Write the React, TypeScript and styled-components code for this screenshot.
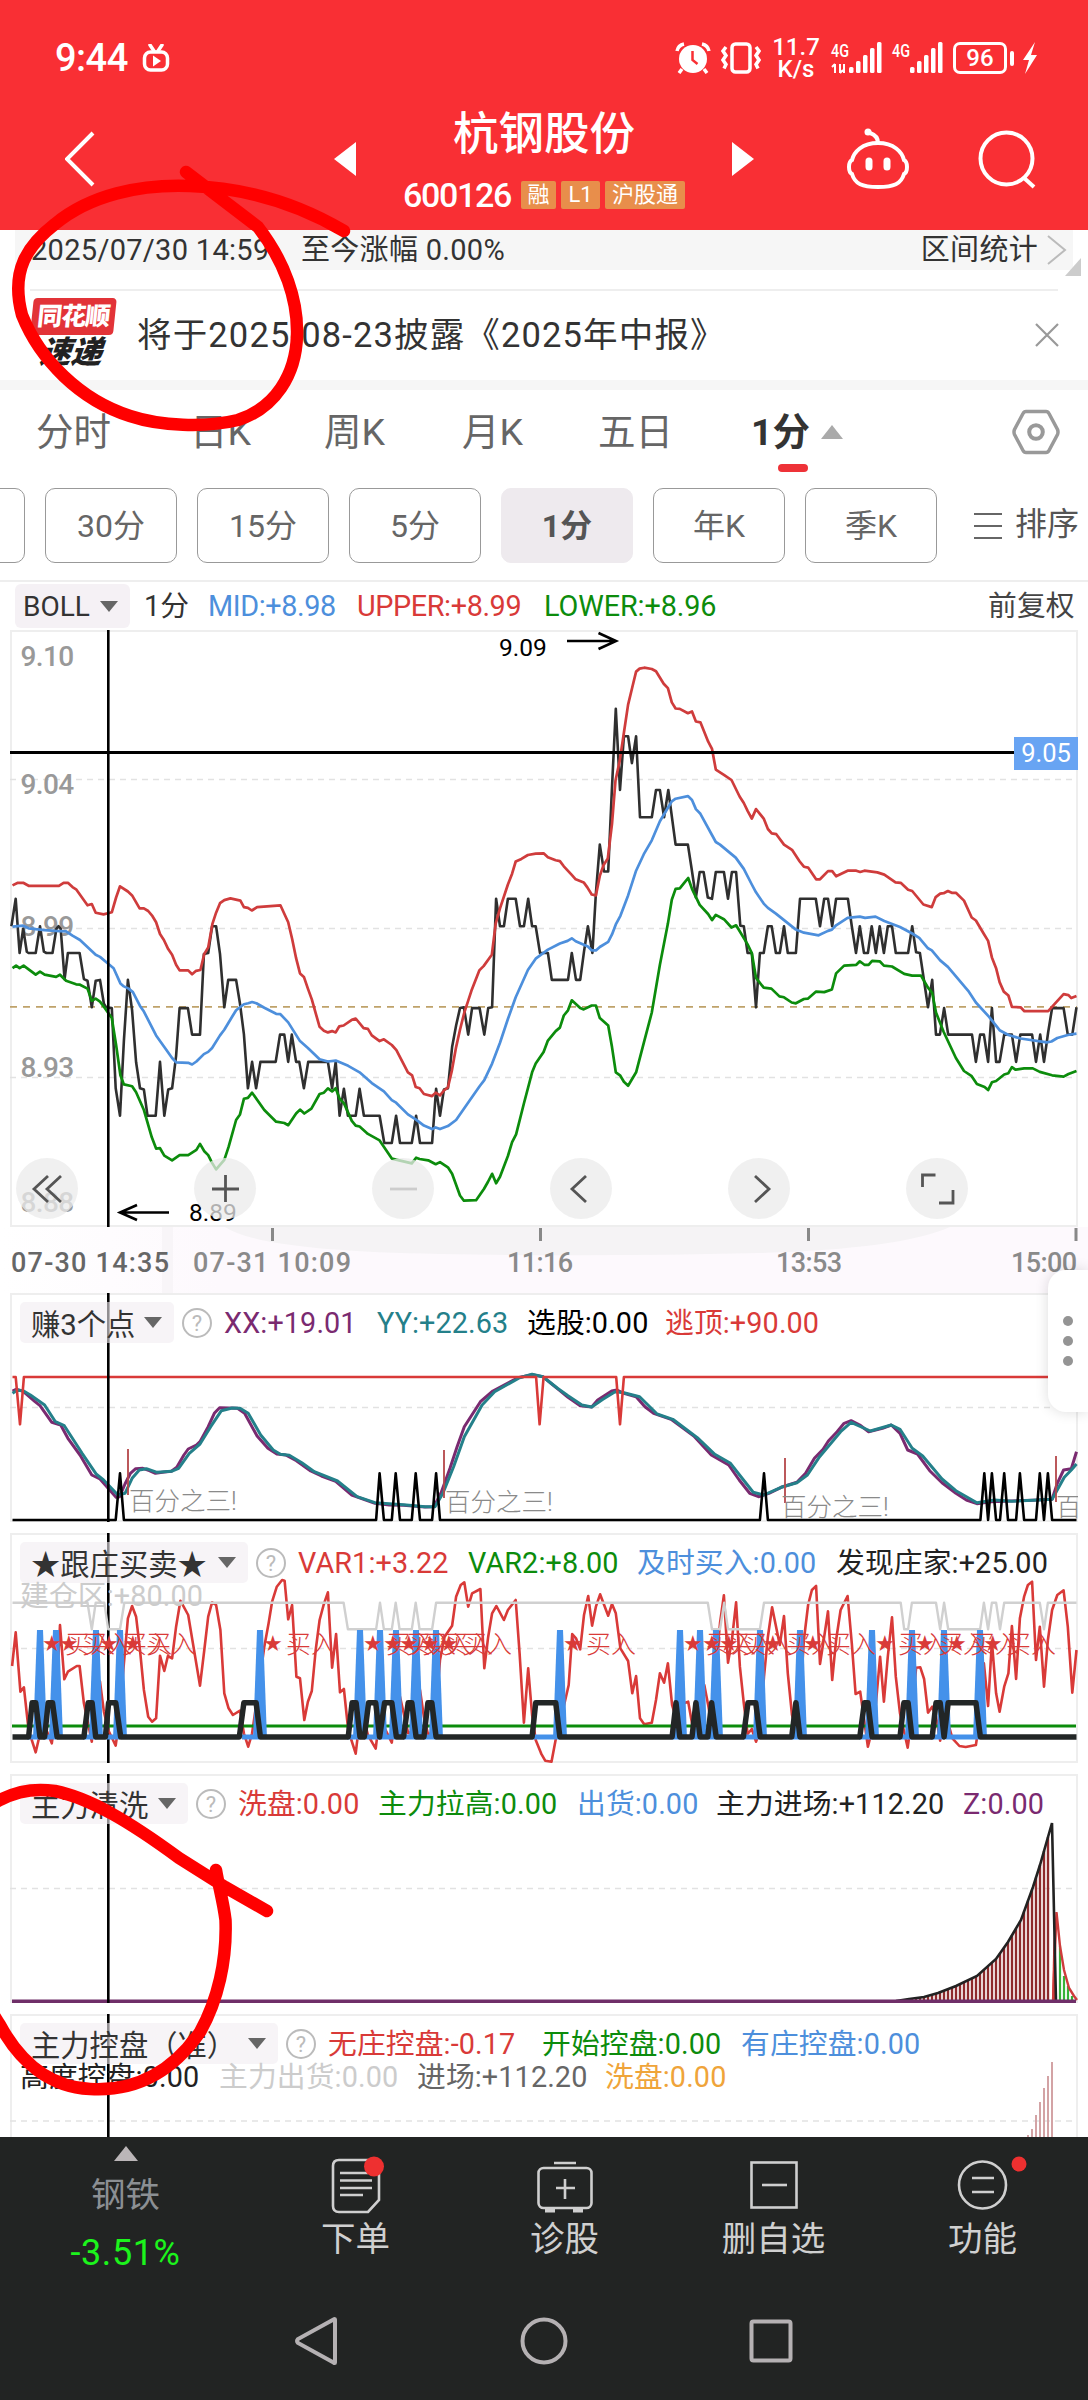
import React from 'react';
import styled, { createGlobalStyle, css } from 'styled-components';

export default function App() {
    return (
        <Screen>
            <GlobalStyle />
            <Header />
            <Summary />
            <News />
            <PeriodTabs />
            <PeriodChips />
            <BollLegend />
            <PriceChart />
            <TimeAxis />
            <ProfitPanel />
            <FollowPanel />
            <WashPanel />
            <ControlPanel />
            <BottomBar />
            <SystemBar />
            <SideHandle>
                <i /><i /><i />
            </SideHandle>
            <Marks />
        </Screen>
    );
}

/* ---------- chart helpers ---------- */

type Sheet = { x: number, kx: number, y: number, ky: number };

// Every series is kept in two halves, each one with its own origin and scale.
const scale = (sheet: Sheet, data: string) =>
    data
        .trim()
        .split(/\s+/)
        .map(pair => {
            const [x, y] = pair.split(',').map(Number);
            return `${(sheet.x + x / sheet.kx).toFixed(1)},${(sheet.y + y / sheet.ky).toFixed(1)}`;
        })
        .join(' ');

const PRICE_AM: Sheet = { x: 0, kx: 2.8, y: -10, ky: 2.306 };
const PRICE_PM: Sheet = { x: 540, kx: 2.861, y: -10, ky: 2.306 };

const panelSheets = (offset: number): [Sheet, Sheet] => [
    { x: 0, kx: 2.8, y: offset, ky: 3 },
    { x: 540, kx: 2.861, y: offset, ky: 3 },
];

function Series({ sheets, data, color, width = 2 }: SeriesProps) {
    return (
        <polyline
            points={ `${scale(sheets[0], data[0])} ${scale(sheets[1], data[1])}` }
            fill="none"
            stroke={color}
            strokeWidth={width}
            strokeLinejoin="round"
        />
    );
}

type SeriesProps = {
    sheets: [Sheet, Sheet]
    data: [string, string]
    color: string
    width?: number
}

const RED = '#d93a38';
const GREEN = '#0c8c0c';
const BLUE = '#4d8fdc';
const INK = '#2f2f2f';
const PURPLE = '#7a2a70';
const TEAL = '#24808a';

const UPPER: [string, string] = [
    `35,612 50,606 65,606 80,613 165,613 178,606 190,606 203,616 213,621 245,658 257,655 268,675 290,679 313,674 325,640 336,614
    358,626 370,635 391,665 403,665 415,671 427,683 437,697 448,724 459,738 471,759 482,772 493,795 503,808 527,808 538,817 549,809
    561,807 572,770 583,755 595,700 605,675 616,653 628,646 645,642 673,647 683,662 694,664 705,670 720,662 785,658 807,697 818,735
    829,780 840,815 851,823 862,850 873,875 885,910 895,938 907,947 918,951 930,948 940,951 950,937 962,935 985,922 996,919 1018,941
    1030,943 1041,958 1063,971 1075,967 1097,980 1110,992 1142,1043 1154,1050 1164,1077 1175,1080 1187,1093 1210,1098 1220,1090
    1232,1096 1243,1085 1254,1078 1265,1040 1277,985 1288,945 1300,905 1310,880 1320,855 1342,808 1354,798 1377,772 1388,700 1400,665
    1422,610 1434,585 1444,557 1460,551 1478,542 1500,539 1522,538 1534,547 1556,554`,
    `57,556 68,568 90,587 102,598 125,605 136,617 148,633 160,635 171,590 182,565 194,550 200,510 206,470 216,370 228,325 240,260
    252,195 264,155 275,119 285,112 298,110 320,113 332,118 354,147 366,157 377,190 388,204 400,205 423,215 435,211 446,234 459,236
    470,258 481,280 492,297 503,345 526,357 548,369 571,407 583,422 594,440 606,458 618,436 640,458 652,482 663,492 676,494 698,518
    721,530 743,557 755,569 767,571 790,598 801,598 824,579 836,579 847,591 880,578 905,578 916,581 928,578 965,582 985,587 1017,605
    1032,606 1053,622 1065,625 1097,656 1121,662 1132,639 1145,631 1155,630 1167,625 1178,629 1190,629 1213,647 1235,686 1247,693
    1270,724 1282,740 1293,778 1305,803 1315,835 1327,857 1340,866 1350,892 1375,893 1386,902 1454,902 1475,883 1498,863 1512,865
    1520,872 1535,867`,
];

const CLOSE: [string, string] = [
    `32,706 44,643 55,768 65,712 75,765 80,768 100,768 112,706 123,765 130,768 147,768 158,712 164,706 170,712 181,828 190,768
    223,768 235,828 245,832 257,893 268,832 280,830 291,885 297,893 313,895 324,1080 336,1143 347,970 358,830 370,900 381,1020
    392,1080 403,1083 413,1143 436,1143 448,1019 460,1143 471,1083 482,1080 493,1005 503,895 526,895 538,956 560,956 571,770 583,768
    594,706 605,706 616,770 628,893 639,830 661,830 672,885 683,955 694,1080 706,1019 717,1080 729,1019 772,1019 784,956 796,956
    807,1019 817,956 829,1019 838,1019 851,1080 863,1019 918,1019 930,1080 940,1019 951,1143 963,1081 974,1143 996,1143 1007,1081
    1019,1143 1063,1143 1076,1206 1097,1206 1109,1143 1120,1206 1153,1206 1165,1143 1176,1206 1210,1206 1221,1081 1232,1143
    1243,1083 1254,1080 1266,985 1277,935 1288,895 1299,893 1311,956 1322,895 1343,895 1356,956 1367,895 1378,893 1389,643 1400,706
    1411,706 1422,643 1444,643 1456,706 1467,706 1479,643 1490,706 1500,706 1512,768 1534,768 1545,830`,
    `57,830 80,830 91,768 103,830 115,830 126,765 137,706 150,768 160,630 171,518 183,580 195,580 205,400 217,205 229,392 240,268
    252,268 263,330 275,268 286,455 320,455 332,392 343,392 355,455 367,392 388,518 423,518 434,575 446,640 457,581 468,581 480,640
    492,643 503,581 526,581 538,643 549,581 561,581 573,705 583,706 594,768 606,768 618,893 629,768 640,768 652,706 663,706 675,768
    686,768 698,706 709,768 732,768 744,643 789,643 801,706 813,643 824,643 836,706 847,643 881,643 892,706 904,768 915,706 927,768
    938,768 949,706 961,768 972,706 984,768 995,706 1007,706 1018,768 1053,768 1065,706 1076,766 1087,768 1110,893 1122,830 1133,956
    1144,956 1156,895 1168,956 1236,956 1247,1019 1259,956 1270,956 1282,1019 1293,895 1305,1019 1315,1019 1328,956 1350,956
    1362,1019 1374,956 1408,956 1419,1019 1431,956 1442,1019 1454,950 1465,895 1498,895 1510,956 1523,956 1535,893`,
];

const MID: [string, string] = [
    `35,707 65,705 80,711 100,713 125,715 155,717 185,718 203,728 224,738 268,772 280,777 302,792 318,803 337,838 347,845 360,850
    372,858 392,890 403,903 437,958 460,985 482,1010 493,1020 527,1021 538,1025 550,1018 571,1001 583,996 594,987 616,958 628,945
    650,915 661,900 683,886 695,884 706,881 718,884 740,894 773,908 785,909 807,928 840,971 862,987 895,1013 918,1018 940,1016
    975,1028 1007,1043 1041,1068 1075,1087 1097,1107 1109,1113 1142,1140 1165,1152 1187,1166 1210,1174 1220,1170 1232,1174 1254,1167
    1277,1153 1310,1114 1343,1075 1356,1061 1378,1023 1400,975 1422,920 1444,870 1478,807 1500,781 1534,760`,
    `57,746 79,740 91,734 102,741 137,753 148,762 160,762 171,754 195,742 206,725 217,702 230,682 252,635 275,578 297,540 320,508
    343,464 377,418 388,412 423,406 435,415 446,436 459,447 503,512 515,518 560,548 583,574 606,610 618,628 640,654 652,664 675,677
    732,714 755,721 797,727 824,717 835,714 847,704 880,687 915,684 930,687 960,684 985,694 1030,708 1065,723 1085,733 1110,757
    1121,762 1145,785 1167,800 1225,855 1247,882 1285,915 1315,946 1340,957 1375,965 1450,974 1463,972 1480,964 1510,957 1535,954`,
];

const LOWER: [string, string] = [
    `35,803 45,797 55,803 66,797 100,818 112,811 125,818 157,823 168,818 185,832 213,840 224,841 245,850 257,878 268,873 280,880
    291,892 313,918 325,980 337,1050 347,1071 370,1075 381,1089 403,1130 425,1193 437,1219 448,1218 460,1235 482,1246 503,1234
    527,1234 550,1222 560,1208 572,1225 583,1234 594,1252 605,1267 628,1245 640,1215 661,1153 672,1140 683,1104 694,1102 706,1090
    740,1130 773,1157 796,1160 807,1165 829,1138 840,1129 852,1138 872,1127 895,1093 907,1090 918,1080 930,1087 940,1080 951,1104
    963,1114 985,1155 996,1166 1007,1168 1030,1185 1063,1200 1097,1242 1153,1253 1165,1240 1175,1243 1199,1246 1220,1255 1232,1250
    1254,1262 1266,1277 1288,1327 1299,1339 1333,1338 1355,1312 1366,1296 1378,1277 1389,1299 1400,1284 1422,1236 1434,1204
    1445,1186 1467,1115 1490,1043 1500,1023 1522,996 1534,970 1556,948`,
    `57,940 68,912 80,900 91,877 115,895 125,898 148,889 160,889 171,918 195,935 206,985 217,1043 229,1050 240,1065 252,1074
    275,1043 297,975 320,905 343,795 366,700 377,645 388,620 400,619 412,607 424,595 435,620 457,657 481,678 492,692 503,680 526,690
    548,709 561,704 594,748 606,768 618,825 640,848 662,850 685,868 698,870 720,882 732,884 755,874 767,873 790,857 813,858 835,852
    847,815 870,797 905,795 915,787 928,795 940,795 950,786 972,787 984,797 1007,799 1042,816 1065,820 1090,820 1110,848 1122,860
    1133,905 1155,950 1190,1010 1213,1040 1235,1052 1250,1070 1272,1077 1282,1084 1293,1066 1305,1063 1328,1048 1340,1045 1350,1031
    1360,1037 1385,1034 1410,1034 1430,1042 1465,1050 1498,1053 1512,1047 1535,1040`,
];

/* ---------- header ---------- */

const SIGNAL = [6, 12, 18, 25, 31];

function Signal({ data }: { data?: boolean }) {
    return (
        <SignalIcon width="51" height="32" viewBox="0 0 51 32" fill="#fff">
            <text x="0" y="15" fontSize="19" fontWeight="500" textLength="18" lengthAdjust="spacingAndGlyphs">4G</text>
            {
                data && <path d="M4 31V22M4 22l-3 3M9 22v9M9 31l3-3M13 22v9" stroke="#fff" strokeWidth="2" fill="none" />
            }
            { SIGNAL.map((h, i) => <rect key={h} x={18 + i * 7} y={31 - h} width="4.500" height={h} rx="1.500" />) }
        </SignalIcon>
    );
}

function Header() {
    return (
        <HeaderArea>
            <StatusBar>
                <Clock>9:44</Clock>
                <svg width="28" height="28" viewBox="0 0 28 28" fill="none" stroke="#fff" strokeWidth="3.500">
                    <path d="M8 1l4 6M20 1l-4 6" strokeLinecap="round" />
                    <rect x="2.500" y="8" width="23" height="18" rx="6" />
                    <path d="M11 11.500l8 5.500l-8 5.500z" fill="#fff" stroke="none" />
                </svg>
                <StatusRight>
                    <svg width="36" height="32" viewBox="0 0 36 32">
                        <circle cx="18" cy="17" r="14" fill="#fff" />
                        <path d="M7 27l-3 4M29 27l3 4M2 9a9 9 0 0 1 7-7M34 9a9 9 0 0 0-7-7" stroke="#fff" strokeWidth="3.500" fill="none" />
                        <path d="M17.500 9v9l5 4" stroke="#f92f34" strokeWidth="2.500" fill="none" />
                    </svg>
                    <svg width="40" height="32" viewBox="0 0 40 32" fill="none" stroke="#fff" strokeWidth="3.500">
                        <rect x="11" y="2" width="18" height="28" rx="3.500" />
                        <path d="M5 5l-3 4 3 4.500-3 4.500 3 4.500-2 4M35 5l3 4-3 4.500 3 4.500-3 4.500 2 4" />
                    </svg>
                    <Speed>
                        <span>11.7</span>
                        <span>K/s</span>
                    </Speed>
                    <Signal data />
                    <Signal />
                    <Battery>96</Battery>
                    <svg width="16" height="32" viewBox="0 0 16 32" fill="#fff">
                        <path d="M13 0L1 18h6L3 32 15 13H9z" />
                    </svg>
                </StatusRight>
            </StatusBar>
            <TitleBar>
                <svg width="30" height="56" viewBox="0 0 30 56" fill="none" stroke="#fff" strokeWidth="4">
                    <path d="M28 2L2 28l26 26" />
                </svg>
                <Arrow $side="left" />
                <TitleBlock>
                    <Title>杭钢股份</Title>
                    <CodeRow>
                        <Code>600126</Code>
                        <Tag $w={35}>融</Tag>
                        <Tag $w={39}>L1</Tag>
                        <Tag $w={80}>沪股通</Tag>
                    </CodeRow>
                </TitleBlock>
                <Arrow $side="right" />
                <RobotIcon width="70" height="62" viewBox="0 0 70 62" fill="none" stroke="#fff" strokeWidth="4">
                    <path d="M35 15c0-5-2-8-8-10" strokeLinecap="round" />
                    <circle cx="25" cy="4" r="3.500" fill="#fff" stroke="none" />
                    <path d="M35 15c16 0 24 9 26 17c4 2 4 12 0 14c-3 10-10 13-26 13s-23-3-26-13c-4-2-4-12 0-14c2-8 10-17 26-17z" />
                    <path d="M26 33v6M44 33v6" strokeWidth="7" strokeLinecap="round" />
                </RobotIcon>
                <SearchIcon width="58" height="60" viewBox="0 0 58 60" fill="none" stroke="#fff" strokeWidth="4">
                    <circle cx="28.500" cy="29.500" r="26" />
                    <path d="M45 48l11 10" />
                </SearchIcon>
            </TitleBar>
        </HeaderArea>
    );
}

function Summary() {
    return (
        <SummaryArea>
            <SummaryBar>
                <SummaryText $w={270}>2025/07/30 14:59</SummaryText>
                <SummaryText>至今涨幅 0.00%</SummaryText>
                <SummaryLink>区间统计</SummaryLink>
                <svg width="22" height="32" viewBox="0 0 22 32" fill="none" stroke="#bbb" strokeWidth="2">
                    <path d="M2 2l17 14L2 30" />
                </svg>
            </SummaryBar>
            <Fold />
        </SummaryArea>
    );
}

function News() {
    return (
        <NewsRow>
            <NewsLogo>
                <b>同花顺</b>
                <em>速递</em>
            </NewsLogo>
            <NewsText>将于2025-08-23披露《2025年中报》</NewsText>
            <svg width="24" height="24" viewBox="0 0 24 24" stroke="#999" strokeWidth="2.200">
                <path d="M1 1l22 22M23 1L1 23" />
            </svg>
        </NewsRow>
    );
}

const TABS = [
    { label: '分时', w: 154 },
    { label: '日K', w: 134 },
    { label: '周K', w: 138 },
    { label: '月K', w: 136 },
    { label: '五日', w: 153 },
];

function PeriodTabs() {
    return (
        <TabsRow>
            { TABS.map(tab => <Tab key={tab.label} $w={tab.w}>{tab.label}</Tab>) }
            <Tab $w={261} $active>
                1分
                <Triangle $up $size={11} $color="#aaa" />
            </Tab>
            <svg width="48" height="46" viewBox="0 0 48 46" fill="none" stroke="#999" strokeWidth="3.500">
                <path d="M14 2.500h20q2 0 3 2l8.500 16q1 2.500 0 5l-8.500 16q-1 2-3 2H14q-2 0-3-2L2.500 25.500q-1-2.500 0-5L11 4.500q1-2 3-2z" />
                <circle cx="24" cy="23" r="6.800" strokeWidth="4" />
            </svg>
        </TabsRow>
    );
}

const CHIPS = ['60分', '30分', '15分', '5分', '1分', '年K', '季K'];

function PeriodChips() {
    return (
        <ChipsRow>
            { CHIPS.map(chip => <Chip key={chip} $active={chip === '1分'}>{chip}</Chip>) }
            <SortButton>
                <svg width="28" height="28" viewBox="0 0 28 28" stroke="#666" strokeWidth="2.200">
                    <path d="M0 2h28M0 14h28M0 26h28" />
                </svg>
                <span>排序</span>
            </SortButton>
        </ChipsRow>
    );
}

function BollLegend() {
    return (
        <BollRow>
            <BollPill>
                BOLL
                <Triangle $size={9} $color="#666" />
            </BollPill>
            <Item $w={64} $color="#333">1分</Item>
            <Item $w={149} $color={BLUE} $tight={-0.4}>MID:+8.98</Item>
            <Item $w={187} $color={RED} $tight={-0.4}>UPPER:+8.99</Item>
            <Item $w={444} $color={GREEN} $tight={-0.1}>LOWER:+8.96</Item>
            <Item $w={90} $color="#444">前复权</Item>
        </BollRow>
    );
}

/* ---------- price chart ---------- */

const AXIS = [
    { label: '9.10', y: 36 },
    { label: '9.04', y: 164 },
    { label: '8.99', y: 306 },
    { label: '8.93', y: 447 },
    { label: '8.88', y: 582 },
];

function PriceChart() {
    const sheets: [Sheet, Sheet] = [PRICE_AM, PRICE_PM];

    return (
        <PriceFrame>
            <Plot width="1068" height="597" viewBox="10 0 1068 597">
                { [149, 298, 447].map(y => <Dashed key={y} d={`M10 ${y}.500H1077`} />) }
                <path d="M10 376.800H1077" stroke="#bfa26a" strokeWidth="1.800" strokeDasharray="7 6" />
                {
                    AXIS.map(tick => (
                        <AxisText key={tick.label} x="20.500" y={tick.y}>{tick.label}</AxisText>
                    ))
                }
                <Series sheets={sheets} data={CLOSE} color={INK} width={2.6} />
                <Series sheets={sheets} data={UPPER} color="#cf3c3c" width={2.7} />
                <Series sheets={sheets} data={MID} color={BLUE} width={2.7} />
                <Series sheets={sheets} data={LOWER} color={GREEN} width={2.7} />
                <PeakText x="499" y="26">9.09</PeakText>
                <path d="M567 11h48M598.500 3l17.500 8-17.500 8" stroke="#000" strokeWidth="2.600" fill="none" />
                <PeakText x="189" y="591">8.89</PeakText>
                <path d="M169 582.500h-48M137 575l-17 7.500 17 7.500" stroke="#000" strokeWidth="2.600" fill="none" />
                <path d="M10 122.500H1014" stroke="#000" strokeWidth="3" />
                <path d="M108.300 0V597" stroke="#000" strokeWidth="2.600" />
            </Plot>
            <PriceTag>9.05</PriceTag>
            <ToolRow>
                <Tool><path d="M32 18L18 31l14 13M45 18L31 31l14 13" /></Tool>
                <Tool><path d="M18 31h27M31.500 17v27" /></Tool>
                <Tool $faint><path d="M18 31h27" /></Tool>
                <Tool><path d="M36 18L22 31l14 13" /></Tool>
                <Tool><path d="M27 18l14 13-14 13" /></Tool>
                <Tool><path d="M16.500 29V17h13M47 32v13H33" /></Tool>
            </ToolRow>
        </PriceFrame>
    );
}

function Tool({ children, $faint }: { children: React.ReactNode, $faint?: boolean }) {
    return (
        <ToolButton>
            <svg width="62" height="62" viewBox="0 0 62 62" fill="none" stroke={$faint ? '#ccc' : '#555'} strokeWidth="2.800">
                {children}
            </svg>
        </ToolButton>
    );
}

function TimeAxis() {
    return (
        <AxisRow>
            <svg width="1088" height="68" viewBox="0 0 1088 68">
                <path d="M225 0H950Q900 22 760 26Q600 30 440 27Q260 24 225 0z" fill="#f5f3f5" />
                <path d="M162 0h11v68h-11z" fill="#f8f5f8" />
                <path d="M272.500 1v13M540.500 1v13M808.500 1v13M1076 1v13" stroke="#888" strokeWidth="3" />
                <TimeText x="11" y="45" textLength="158" $dark>07-30 14:35</TimeText>
                <TimeText x="193" y="45" textLength="158">07-31 10:09</TimeText>
                <TimeText x="507" y="45" textLength="66">11:16</TimeText>
                <TimeText x="776" y="45" textLength="66">13:53</TimeText>
                <TimeText x="1011" y="45" textLength="66">15:00</TimeText>
            </svg>
        </AxisRow>
    );
}

/* ---------- indicator panels ---------- */

type LegendItem = { text: string, w: number, color: string };

function Legend({ name, pill, items, second }: LegendProps) {
    return (
        <LegendArea>
            <LegendRow>
                <Pill $w={pill}>
                    <span>{name}</span>
                    <Triangle $size={9} $color="#666" />
                </Pill>
                <Help>?</Help>
                { items.map(item => <Item key={item.text} $w={item.w} $color={item.color}>{item.text}</Item>) }
            </LegendRow>
            {
                second && (
                    <LegendRow $second>
                        { second.map(item => <Item key={item.text} $w={item.w} $color={item.color}>{item.text}</Item>) }
                    </LegendRow>
                )
            }
        </LegendArea>
    );
}

type LegendProps = {
    name: string
    pill: number
    items: LegendItem[]
    second?: LegendItem[]
}

const XX: [string, string] = [
    `35,333 45,328 65,334 98,365 112,377 145,427 170,435 190,475 224,525 257,585 280,597 325,652 335,650 350,612 365,580 380,566
    400,565 418,572 435,580 460,576 480,574 495,562 515,525 527,507 550,495 560,485 583,440 600,400 615,383 640,384 665,385 685,400
    720,468 750,505 775,522 800,525 830,542 870,573 900,588 940,604 985,645 1050,670 1090,675 1130,676 1190,681 1215,680 1235,638
    1260,565 1280,500 1300,440 1345,365 1380,333 1450,293 1490,284 1520,290 1545,312`,
    `57,332 80,352 115,377 148,381 165,360 205,333 220,330 240,340 275,350 300,380 325,400 375,418 440,468 490,525 540,555 570,600
    600,640 625,650 655,640 690,622 735,607 760,580 785,535 810,508 825,483 850,455 870,430 890,422 915,435 940,455 980,445 1005,435
    1030,460 1052,510 1080,522 1115,572 1150,608 1190,640 1220,660 1250,671 1290,665 1410,661 1465,658 1480,610 1498,570 1520,566
    1535,515`,
];

const YY: [string, string] = [
    `35,340 48,331 65,332 85,345 125,375 155,425 180,437 230,520 270,583 290,600 330,645 350,640 370,595 390,570 410,566 440,577
    480,574 500,565 530,520 560,492 590,440 620,392 650,384 672,385 695,400 730,465 765,510 785,523 810,526 845,548 880,575 945,603
    1000,650 1050,668 1130,674 1190,680 1218,680 1240,640 1270,560 1300,470 1350,375 1385,335 1455,293 1490,283 1520,290`,
    `20,300 50,325 80,347 120,375 148,381 180,358 215,335 240,338 285,350 335,402 380,418 450,473 500,523 545,550 580,597 610,637
    640,645 690,622 735,608 765,585 800,530 860,455 890,427 945,453 1005,435 1030,448 1065,505 1095,528 1150,597 1190,632 1250,668
    1300,660 1350,664 1410,661 1465,658 1500,592 1520,570 1535,552`,
];

const ESCAPE: [string, string] = [
    '35,291 44,291 56,433 67,291 1501,291 1511,433 1522,291 1560,291',
    '57,291 218,291 229,433 240,291 1535,291',
];

const PICK: [string, string] = [
    `35,720 324,720 336,580 347,720 1053,720 1063,580 1075,720 1097,720 1108,580 1120,720 1153,720 1164,580 1176,720 1210,720
    1221,580 1232,720 1560,720`,
    `57,720 629,720 641,580 652,720 1260,720 1271,580 1282,720 1293,580 1305,720 1316,720 1328,580 1339,720 1362,720 1373,580
    1385,720 1419,720 1430,580 1442,720 1453,580 1465,720 1535,720`,
];

function ProfitPanel() {
    const sheets = panelSheets(-13);

    return (
        <Panel $h={229}>
            <Plot width="1068" height="229" viewBox="10 0 1068 229">
                <Dashed d="M10 114.500H1077" />
                <Series sheets={sheets} data={XX} color={PURPLE} width={3} />
                <Series sheets={sheets} data={YY} color={TEAL} width={3} />
                <Series sheets={sheets} data={ESCAPE} color={RED} width={2.6} />
                <path d="M128 156v46M444 157v48M785 165v45M1056 163v46" stroke="#b5474a" strokeWidth="1.800" />
                <Series sheets={sheets} data={PICK} color="#000" width={2.6} />
                <path d="M108.300 0V229" stroke="#000" strokeWidth="2.600" />
                <NoteText x="129" y="217">百分之三!</NoteText>
                <NoteText x="445" y="218">百分之三!</NoteText>
                <NoteText x="781" y="223">百分之三!</NoteText>
                <NoteText x="1056" y="223">百分之三!</NoteText>
            </Plot>
            <Legend
                name="赚3个点"
                pill={154}
                items={[
                    { text: 'XX:+19.01', w: 153, color: PURPLE },
                    { text: 'YY:+22.63', w: 150, color: TEAL },
                    { text: '选股:0.00', w: 138, color: '#000' },
                    { text: '逃顶:+90.00', w: 160, color: RED },
                ]}
            />
        </Panel>
    );
}

const SWING: [string, string] = [
    `34,408 44,307 57,485 67,472 80,600 100,667 110,620 130,600 145,640 155,560 168,285 180,448 190,425 215,408 223,408 235,520
    257,635 268,440 280,455 291,545 303,600 324,647 335,560 347,400 358,265 370,228 381,260 392,360 403,480 415,560 426,575 437,565
    448,377 460,423 470,378 482,385 493,290 505,212 527,255 540,340 560,467 572,360 583,260 594,217 605,225 617,300 628,490 640,535
    652,555 672,542 683,610 695,650 706,610 730,430 740,350 752,280 762,215 775,170 790,150 797,152 807,268 818,225 830,440 840,445
    852,570 862,515 873,483 884,360 895,270 906,225 918,187 930,413 941,312 952,487 963,477 975,600 996,671 1008,560 1020,570
    1030,615 1052,656 1063,560 1075,590 1097,638 1108,520 1120,500 1143,610 1165,600 1176,480 1187,560 1200,620 1210,600 1221,540
    1232,390 1245,320 1266,287 1277,200 1290,165 1300,157 1311,230 1322,190 1345,177 1356,415 1367,320 1378,250 1390,228 1411,270
    1422,240 1444,210 1455,370 1467,578 1479,415 1490,555 1500,630 1515,670`,
    `3,670 15,692 33,695 50,600 70,520 82,465 92,312 103,325 115,358 126,255 138,198 149,287 160,230 172,193 195,257 206,222
    217,250 230,355 252,393 264,490 275,438 286,565 298,583 320,578 332,510 343,430 355,458 366,400 378,525 400,600 412,520 424,515
    435,580 457,600 470,465 482,530 492,600 503,420 515,280 526,196 538,398 549,330 561,217 572,410 583,520 594,612 606,597 618,635
    630,600 641,440 652,320 664,232 686,345 698,258 709,430 721,555 732,600 744,520 755,330 767,225 778,180 790,168 801,402 813,320
    824,244 836,450 847,330 860,240 880,198 892,340 903,492 916,485 926,560 938,650 950,600 961,520 973,380 984,515 995,380 1007,262
    1018,440 1030,550 1052,653 1064,560 1076,413 1088,412 1099,447 1110,548 1122,530 1133,560 1145,632 1156,540 1168,580 1180,625
    1200,648 1218,651 1247,645 1259,560 1270,400 1282,528 1293,335 1305,490 1315,545 1328,470 1340,430 1350,288 1362,447 1373,265
    1385,200 1396,165 1408,155 1419,390 1430,290 1442,470 1453,330 1465,240 1480,195 1498,181 1510,290 1523,488 1535,360`,
];

const BUILD: [string, string] = [
    `35,218 245,218 257,298 268,218 292,218 303,298 336,298 348,218 962,218 974,298 1053,298 1064,218 1075,298 1097,298 1108,218
    1119,298 1153,298 1164,218 1175,298 1210,298 1221,218 1560,218`,
    `57,218 480,218 492,298 515,298 527,218 538,298 629,298 641,218 1032,218 1042,298 1053,298 1064,218 1133,218 1145,298 1156,218
    1168,298 1259,298 1270,218 1282,298 1293,218 1305,218 1316,298 1328,218 1430,218 1442,298 1453,218 1535,218`,
];

const BANKER: [string, string] = [
    `35,621 80,621 90,518 100,518 112,621 125,621 135,518 147,518 160,621 235,621 247,518 258,518 268,621 295,621 304,518 324,518
    338,621 670,621 683,518 717,518 729,621 975,621 986,518 997,518 1008,621 1020,621 1032,518 1052,518 1063,621 1077,518 1097,518
    1110,621 1130,621 1143,518 1153,518 1165,621 1187,621 1198,518 1209,518 1221,621 1490,621 1500,518 1553,518`,
    `45,518 57,621 378,621 389,518 400,621 435,621 446,518 458,621 480,621 491,518 504,621 582,621 595,518 617,518 630,621 720,621
    732,518 744,621 915,621 928,518 938,518 950,621 1030,621 1041,518 1053,518 1064,621 1122,621 1133,518 1145,518 1156,621 1168,518
    1247,518 1260,621 1535,621`,
];

// x of each buy spike, and how far its base runs to the left
const SPIKES = [
    [40, 9], [56, 9], [96, 9], [120, 10], [260, 14], [360, 9], [380, 12], [396, 12], [416, 9], [436, 9],
    [560, 24], [680, 4], [700, 4], [716, 4], [760, 13], [800, 4], [872, 9], [912, 9], [944, 9], [980, 30],
];

const STARS = [51, 68, 108, 132, 272, 372, 392, 408, 429, 448, 572, 692, 711, 728, 772, 812, 884, 924, 956, 992];

function FollowPanel() {
    const sheets = panelSheets(-3);

    return (
        <Panel $h={230}>
            <Plot width="1068" height="230" viewBox="10 0 1068 230">
                <Dashed d="M10 115.500H1077" />
                <path d="M108.300 0V230" stroke="#000" strokeWidth="2.600" />
                <Series sheets={sheets} data={SWING} color={RED} width={2.6} />
                <Series sheets={sheets} data={BUILD} color="#d0d0d0" width={2.4} />
                <path d="M12 193H1076" stroke={GREEN} strokeWidth="2.800" />
                {
                    SPIKES.map(([x, run]) => (
                        <React.Fragment key={x}>
                            <path d={`M${x - 3} 97h6l4 109h-14z`} fill="#4491ea" />
                            <path d={`M${x - run - 4} 204h${run + 4}`} stroke="#4491ea" strokeWidth="5" />
                        </React.Fragment>
                    ))
                }
                {
                    STARS.map(x => (
                        <React.Fragment key={x}>
                            <StarText x={x - 9} y="118">★</StarText>
                            <BuyText x={x + 14} y="120">买入</BuyText>
                        </React.Fragment>
                    ))
                }
                <Series sheets={sheets} data={BANKER} color="#222626" width={5.5} />
            </Plot>
            <Legend
                name="★跟庄买卖★"
                pill={228}
                items={[
                    { text: 'VAR1:+3.22', w: 170, color: RED },
                    { text: 'VAR2:+8.00', w: 169, color: GREEN },
                    { text: '及时买入:0.00', w: 199, color: BLUE },
                    { text: '发现庄家:+25.00', w: 220, color: '#222' },
                ]}
                second={[{ text: '建仓区:+80.00', w: 190, color: '#ccc' }]}
            />
        </Panel>
    );
}

// outline of the inflow hill: x, height over the base line
const HILL = [
    [896, 1], [909, 3], [924, 5], [938, 9], [956, 16], [977, 26], [996, 43], [1008, 60], [1021, 82], [1033, 115], [1040, 137], [1052, 179],
];

function hillHeight(x: number) {
    const next = HILL.findIndex(point => point[0] >= x);
    const [x1, h1] = HILL[next];
    const [x0, h0] = HILL[Math.max(next - 1, 0)];

    return x1 === x0 ? h1 : h0 + (h1 - h0) * (x - x0) / (x1 - x0);
}

function WashPanel() {
    const bars = Array.from({ length: 38 }, (_, i) => 1048 - i * 4);

    return (
        <Panel $h={229}>
            <Plot width="1068" height="229" viewBox="10 0 1068 229">
                <Dashed d="M10 114.500H1077" />
                { bars.map(x => <path key={x} d={`M${x} 228v-${hillHeight(x).toFixed(1)}`} stroke="#8e2a2c" strokeWidth="2.400" />) }
                <path d="M1060 228v-56M1064 228v-26M1068 228v-16M1072 228v-6" stroke="#36b336" strokeWidth="2.200" />
                <path d="M1052 227l1.500-70 2.500 70z" fill={RED} />
                <path d="M1053 227L1056.500 138L1060 172L1064 196L1069 214L1074 222L1077 226" stroke="#cf3c3c" strokeWidth="2.400" fill="none" />
                <polyline
                    points={ HILL.map(([x, h]) => `${x},${228 - h}`).join(' ') + ' 1056,228' }
                    fill="none"
                    stroke="#222"
                    strokeWidth="2.600"
                />
                <path d="M12 227.500H1076" stroke="#6f2f68" strokeWidth="4" />
                <path d="M108.300 0V229" stroke="#000" strokeWidth="2.600" />
            </Plot>
            <Legend
                name="主力清洗"
                pill={168}
                items={[
                    { text: '洗盘:0.00', w: 140, color: RED },
                    { text: '主力拉高:0.00', w: 199, color: GREEN },
                    { text: '出货:0.00', w: 139, color: BLUE },
                    { text: '主力进场:+112.20', w: 247, color: '#222' },
                    { text: 'Z:0.00', w: 80, color: PURPLE },
                ]}
            />
        </Panel>
    );
}

const TAIL_BARS = [48, 62, 74, 88, 101, 115, 121];

function ControlPanel() {
    return (
        <Panel $h={123} $last>
            <Plot width="1068" height="123" viewBox="10 0 1068 123">
                <Dashed d="M10 107H1077" />
                { TAIL_BARS.map((y, i) => <path key={y} d={`M${1052 - i * 4} ${y}V123`} stroke="#d3a3a5" strokeWidth="2" />) }
                <path d="M108.300 0V123" stroke="#000" strokeWidth="2.600" />
            </Plot>
            <Legend
                name="主力控盘（准）"
                pill={258}
                items={[
                    { text: '无庄控盘:-0.17', w: 214, color: RED },
                    { text: '开始控盘:0.00', w: 199, color: GREEN },
                    { text: '有庄控盘:0.00', w: 199, color: BLUE },
                ]}
                second={[
                    { text: '高度控盘:0.00', w: 199, color: '#222' },
                    { text: '主力出货:0.00', w: 198, color: '#ccc' },
                    { text: '进场:+112.20', w: 188, color: '#666' },
                    { text: '洗盘:0.00', w: 140, color: '#efa43a' },
                ]}
            />
        </Panel>
    );
}

/* ---------- bottom ---------- */

function BottomBar() {
    return (
        <BottomRow>
            <Sector>
                <Triangle $up $size={12} $color="#bbb6b8" />
                <SectorName>钢铁</SectorName>
                <SectorChange>-3.51%</SectorChange>
            </Sector>
            <NavItem>
                <NavIcon viewBox="0 0 80 64">
                    <path d="M23 8q-6 0-6 6v40q0 6 6 6h29l11-12V14q0-6-6-6z" />
                    <path d="M24 21h28M24 28.500h32M24 36h32M24 43h23" />
                    <circle cx="58" cy="14.500" r="10" fill="#ee3030" stroke="none" />
                </NavIcon>
                下单
            </NavItem>
            <NavItem>
                <NavIcon viewBox="0 0 80 64">
                    <rect x="13.500" y="16" width="53" height="40" rx="5" />
                    <path d="M29 11h22M40 27v20M31 36h19" />
                    <path d="M20 58h10M48 58h10" strokeWidth="5" />
                </NavIcon>
                诊股
            </NavItem>
            <NavItem>
                <NavIcon viewBox="0 0 80 64">
                    <rect x="17.500" y="10.500" width="45" height="45" />
                    <path d="M28 33h25" />
                </NavIcon>
                删自选
            </NavItem>
            <NavItem>
                <NavIcon viewBox="0 0 80 64">
                    <circle cx="39.500" cy="33" r="23.500" />
                    <path d="M29 26h22M29 40h22" />
                    <circle cx="76" cy="12" r="7.500" fill="#ee3030" stroke="none" />
                </NavIcon>
                功能
            </NavItem>
        </BottomRow>
    );
}

function SystemBar() {
    return (
        <SystemRow>
            <svg width="46" height="52" viewBox="0 0 46 52"><path d="M41 4.500v43q0 1-1.500 0L4 28q-2-2 0-4L39.500 4.500q1.500-1 1.500 0z" /></svg>
            <svg width="52" height="52" viewBox="0 0 52 52"><circle cx="26" cy="26" r="21.500" /></svg>
            <svg width="46" height="52" viewBox="0 0 46 52"><rect x="3.500" y="6.500" width="39" height="39" rx="2" /></svg>
        </SystemRow>
    );
}

function Marks() {
    return (
        <MarksLayer viewBox="0 0 1088 2400">
            <path d="M186 172L258 227C285 262 298 300 297 335C296 375 275 408 238 420C205 428 160 426 130 416C80 400 40 360 22 315C10 270 28 245 55 224C90 195 140 184 190 186C250 188 300 205 344 231" />
            <path d="M267 1911L225 1887L179 1858C130 1822 90 1798 55 1791C35 1788 15 1792 0 1800C-60 1830 -50 1950 0 2025C20 2062 50 2087 90 2089C140 2092 175 2068 200 2032C218 2000 227 1960 225.500 1920C223 1900 219 1888 216 1870" />
        </MarksLayer>
    );
}

/* ---------- styles ---------- */

const GlobalStyle = createGlobalStyle`
    * {
        box-sizing: border-box;
    }

    body {
        margin: 0;
        background: #fff;
        font-family: Roboto, "Noto Sans CJK SC", sans-serif;
    }

    svg {
        display: block;
        flex: none;
    }
`;

const Screen = styled.div`
    position: relative;
    width: 1088px;
    height: 2400px;
    overflow: hidden;
    background: #fff;
`;

const HeaderArea = styled.header`
    height: 230px;
    background: #f92f34;
    color: #fff;
`;

const StatusBar = styled.div`
    display: flex;
    align-items: center;
    height: 100px;
    padding: 16px 50px 0 55px;
`;

const Clock = styled.div`
    width: 87px;
    font-size: 38px;
    font-weight: 500;
    letter-spacing: -0.5px;
`;

const StatusRight = styled.div`
    display: flex;
    align-items: center;
    gap: 10px;
    margin-left: auto;
`;

const SignalIcon = styled.svg`
    overflow: visible;
`;

const Speed = styled.div`
    display: flex;
    flex-direction: column;
    align-items: center;
    width: 50px;
    font-size: 24px;
    font-weight: 500;
    line-height: 22px;
`;

const Battery = styled.div`
    position: relative;
    width: 54px;
    height: 32px;
    margin: 0 5px 0 0;
    border: 3px solid #fff;
    border-radius: 7px;
    font-size: 24px;
    font-weight: 500;
    line-height: 27px;
    text-align: center;

    &::after {
        content: '';
        position: absolute;
        top: 6px;
        right: -10px;
        width: 4px;
        height: 15px;
        border-radius: 2px;
        background: #fff;
    }
`;

const TitleBar = styled.div`
    display: flex;
    align-items: center;
    height: 118px;
    padding-left: 65px;
`;

const Arrow = styled.div<{ $side: 'left' | 'right' }>`
    border: 17px solid transparent;

    ${({ $side }) => $side === 'left' ? css`
        margin-left: 239px;
        border-left-width: 0;
        border-right: 22px solid #fff;
    ` : css`
        border-right-width: 0;
        border-left: 22px solid #fff;
    `}
`;

const TitleBlock = styled.div`
    display: flex;
    flex-direction: column;
    align-items: center;
    width: 376px;
`;

const Title = styled.h1`
    margin: 0;
    font-size: 45.5px;
    font-weight: 500;
    line-height: 62px;
`;

const CodeRow = styled.div`
    display: flex;
    align-items: center;
    gap: 5px;
    height: 48px;
    padding-top: 9px;
`;

const Code = styled.div`
    margin-right: 5px;
    font-size: 34px;
    font-weight: 500;
    letter-spacing: -1.3px;
`;

const Tag = styled.div<{ $w: number }>`
    width: ${({ $w }) => $w}px;
    height: 28px;
    border-radius: 2px;
    background: #e88e4b;
    font-size: 22px;
    line-height: 28px;
    text-align: center;
`;

const RobotIcon = styled.svg`
    margin-left: 89px;
`;

const SearchIcon = styled.svg`
    margin-left: 65px;
`;

const SummaryArea = styled.div`
    position: relative;
    height: 59px;
    padding: 0 15px;
`;

const SummaryBar = styled.div`
    display: flex;
    align-items: center;
    height: 40px;
    padding: 0 5px 0 16px;
    background: #f6f6f6;
    color: #333;
`;

const SummaryText = styled.div<{ $w?: number }>`
    width: ${({ $w }) => $w ? `${$w}px` : 'auto'};
    font-size: 29px;
    letter-spacing: 0.3px;
    line-height: 38px;
    white-space: nowrap;
`;

const SummaryLink = styled(SummaryText)`
    margin: 0 8px 0 auto;
`;

const Fold = styled.div`
    position: absolute;
    top: 28px;
    right: 7px;
    border-left: 16px solid transparent;
    border-bottom: 18px solid #ccc;
`;

const NewsRow = styled.div`
    display: flex;
    align-items: center;
    height: 101px;
    padding: 0 29px 0 30px;
    border-bottom: 10px solid #f6f6f6;
    background: linear-gradient(#eee, #eee) 30px 0 / 1028px 2px no-repeat;
`;

const NewsLogo = styled.div`
    display: flex;
    flex-direction: column;
    width: 107px;
    transform: skewX(-6deg);

    b {
        width: 83px;
        height: 37px;
        border-radius: 4px;
        background: #e23338;
        color: #fff;
        font-size: 25px;
        font-weight: 900;
        letter-spacing: -1px;
        line-height: 37px;
        text-align: center;
    }

    em {
        padding-left: 12px;
        color: #222;
        font-size: 31px;
        font-weight: 900;
        line-height: 36px;
    }
`;

const NewsText = styled.div`
    flex: 1;
    margin-top: -6px;
    color: #333;
    font-size: 34.5px;
    letter-spacing: 1.15px;
    white-space: nowrap;
`;

const TabsRow = styled.div`
    display: flex;
    align-items: center;
    height: 98px;
    padding: 0 28px 15px 36px;
`;

const Tab = styled.div<{ $w: number, $active?: boolean }>`
    display: flex;
    align-items: center;
    gap: 11px;
    position: relative;
    width: ${({ $w }) => $w}px;
    color: #666;
    font-size: 37.5px;
    line-height: 50px;

    ${({ $active }) => $active && css`
        color: #333;
        font-weight: 700;

        &::after {
            content: '';
            position: absolute;
            left: 27px;
            bottom: -15px;
            width: 30px;
            height: 8px;
            border-radius: 4px;
            background: #ee3238;
        }
    `}
`;

const Triangle = styled.i<{ $up?: boolean, $size: number, $color: string }>`
    display: block;
    flex: none;
    border: ${({ $size }) => $size}px solid transparent;

    ${({ $up, $size, $color }) => $up ? css`
        border-top-width: 0;
        border-bottom: ${$size * 1.3}px solid ${$color};
    ` : css`
        border-bottom-width: 0;
        border-top: ${$size * 1.3}px solid ${$color};
    `}
`;

const ChipsRow = styled.div`
    display: flex;
    gap: 20px;
    height: 94px;
    margin-left: -107px;
    border-bottom: 2px solid #eee;
`;

const Chip = styled.div<{ $active: boolean }>`
    flex: none;
    width: 132px;
    height: 75px;
    border: 1px solid #999;
    border-radius: 10px;
    color: #666;
    font-size: 32px;
    line-height: 74px;
    text-align: center;

    ${({ $active }) => $active && css`
        border-color: #eeeaee;
        background: #eeeaee;
        color: #555;
        font-weight: 700;
    `}
`;

const SortButton = styled.div`
    display: flex;
    flex: none;
    align-items: center;
    gap: 13px;
    height: 75px;
    margin-left: 17px;
    color: #555;
    font-size: 32px;
    line-height: 40px;

    span {
        margin-top: -3px;
    }
`;

const BollRow = styled.div`
    display: flex;
    align-items: center;
    height: 48px;
    padding-left: 15px;
`;

const BollPill = styled.div`
    display: flex;
    align-items: center;
    gap: 10px;
    width: 115px;
    height: 44px;
    margin-right: 14px;
    padding-left: 8px;
    border-radius: 6px;
    background: #f5f1f5;
    color: #333;
    font-size: 28px;
`;

const Item = styled.div<{ $w: number, $color: string, $tight?: number }>`
    flex: none;
    width: ${({ $w }) => $w}px;
    padding-top: 1px;
    color: ${({ $color }) => $color};
    font-size: 28.8px;
    letter-spacing: ${({ $tight = 0.1 }) => $tight}px;
    line-height: 41px;
    white-space: nowrap;
`;

const PriceFrame = styled.section`
    position: relative;
    width: 1068px;
    height: 597px;
    margin-left: 10px;
    border: 2px solid #eee;
`;

const Plot = styled.svg`
    grid-area: 1 / 1;
    margin: -2px;
`;

const Dashed = styled.path`
    stroke: #e2e2e2;
    stroke-width: 1.5px;
    stroke-dasharray: 6 5;
`;

const AxisText = styled.text`
    fill: #999;
    font-size: 28px;
    font-weight: 500;
    letter-spacing: -0.6px;
`;

const PeakText = styled.text`
    fill: #000;
    font-size: 24.5px;
`;

const TimeText = styled.text<{ $dark?: boolean }>`
    fill: ${({ $dark }) => $dark ? '#666' : '#8a8a8a'};
    font-size: 27px;
    font-weight: 500;
`;

const NoteText = styled.text`
    fill: #8a8a8a;
    font-size: 25.5px;
    font-weight: 300;
`;

const StarText = styled.text`
    fill: ${RED};
    font-family: "DejaVu Sans", sans-serif;
    font-size: 22px;
`;

const BuyText = styled.text`
    fill: ${RED};
    font-size: 25px;
    font-weight: 300;
`;

const PriceTag = styled.div`
    position: absolute;
    top: 105px;
    right: -2px;
    width: 64px;
    height: 33px;
    background: #68a4f3;
    color: #fff;
    font-size: 25.5px;
    line-height: 33px;
    text-align: center;
`;

const ToolRow = styled.div`
    display: flex;
    gap: 116px;
    position: absolute;
    left: 4px;
    bottom: 6px;
`;

const ToolButton = styled.div`
    width: 62px;
    height: 61px;
    border-radius: 50%;
    background: rgba(235, 235, 235, 0.75);
`;

const AxisRow = styled.div`
    height: 66px;
    overflow: hidden;
    background: linear-gradient(90deg, #fff, #fdf9fd 20%);
`;

const Panel = styled.section<{ $h: number, $last?: boolean }>`
    display: grid;
    width: 1068px;
    height: ${({ $h }) => $h}px;
    margin: 0 0 ${({ $last }) => $last ? 0 : 11}px 10px;
    border: 2px solid #eee;
    ${({ $last }) => $last && 'border-bottom: 0;'}
`;

const LegendArea = styled.div`
    grid-area: 1 / 1;
    padding: 7px 0 0 8px;
`;

const LegendRow = styled.div<{ $second?: boolean }>`
    display: flex;
    align-items: center;
    height: ${({ $second }) => $second ? 34 : 41}px;
    ${({ $second }) => $second && 'margin-top: -4px;'}
`;

const Pill = styled.div<{ $w: number }>`
    display: flex;
    flex: none;
    align-items: center;
    justify-content: space-between;
    width: ${({ $w }) => $w}px;
    height: 41px;
    padding: 0 12px 0 11px;
    border-radius: 5px;
    background: rgba(242, 236, 242, 0.6);
    color: #333;
    font-size: 29.3px;
    white-space: nowrap;

    span {
        margin-top: -2px;
    }
`;

const Help = styled.div`
    flex: none;
    width: 30px;
    height: 30px;
    margin: 0 12px 0 8px;
    border: 2px solid #bbb;
    border-radius: 50%;
    color: #bbb;
    font-size: 22px;
    line-height: 27px;
    text-align: center;
`;

const BottomRow = styled.nav`
    display: flex;
    height: 144px;
    background: #222423;
`;

const Sector = styled.div`
    display: flex;
    flex-direction: column;
    align-items: center;
    width: 251px;
    padding-top: 9px;
`;

const SectorName = styled.div`
    margin-top: 9px;
    color: #8b8f93;
    font-size: 34.5px;
    line-height: 50px;
`;

const SectorChange = styled.div`
    margin-top: 13px;
    color: #1cf41c;
    font-size: 36px;
    letter-spacing: 0.6px;
    line-height: 40px;
`;

const NavItem = styled.div`
    display: flex;
    flex-direction: column;
    align-items: center;
    width: 209px;
    padding-top: 15px;
    color: #d0d0d0;
    font-size: 34.5px;
    line-height: 46px;
`;

const NavIcon = styled.svg`
    width: 80px;
    height: 64px;
    overflow: visible;
    fill: none;
    stroke: #cfcfcf;
    stroke-width: 2.6px;
`;

const SystemRow = styled.div`
    display: flex;
    align-items: center;
    gap: 178px;
    height: 120px;
    padding-left: 294px;
    background: #222423;

    svg {
        fill: none;
        stroke: #b5b1b3;
        stroke-width: 4px;
    }
`;

const SideHandle = styled.div`
    display: flex;
    flex-direction: column;
    align-items: center;
    justify-content: center;
    gap: 10px;
    position: absolute;
    top: 1270px;
    right: 0;
    width: 40px;
    height: 142px;
    border-radius: 18px 0 0 18px;
    background: #fff;
    box-shadow: 0 0 14px rgba(0, 0, 0, 0.14);

    i {
        width: 10px;
        height: 10px;
        border-radius: 50%;
        background: #949494;
    }
`;

const MarksLayer = styled.svg`
    position: absolute;
    inset: 0;
    width: 1088px;
    height: 2400px;
    pointer-events: none;

    path {
        fill: none;
        stroke: #f00;
        stroke-width: 12.5px;
        stroke-linecap: round;
        stroke-linejoin: round;
    }
`;
